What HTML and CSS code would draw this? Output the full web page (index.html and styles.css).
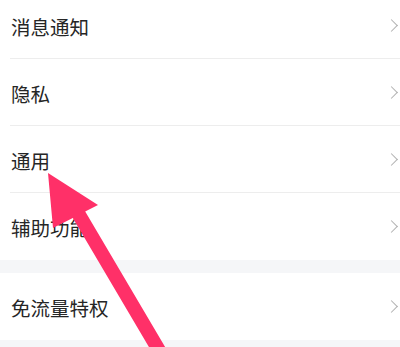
FILE: index.html
```html
<!DOCTYPE html>
<html lang="zh-CN">
<head>
    <meta charset="UTF-8">
    <meta name="viewport" content="width=device-width, initial-scale=1.0">
    <title>设置</title>
    <link rel="stylesheet" href="styles.css">
</head>
<body>
    <div class="page">
        <div class="group">
            <div class="row"><span class="label">消息通知</span><span class="chevron"></span></div>
            <div class="row"><span class="label">隐私</span><span class="chevron"></span></div>
            <div class="row"><span class="label">通用</span><span class="chevron"></span></div>
            <div class="row"><span class="label">辅助功能</span><span class="chevron"></span></div>
        </div>
        <div class="group">
            <div class="row"><span class="label">免流量特权</span><span class="chevron"></span></div>
        </div>

        <!-- pointer drawn over the list -->
        <svg class="pointer" width="400" height="347" viewBox="0 0 400 347">
            <polygon points="48,173 98,205 85.2,211.5 172.8,360 156.6,360 72.8,217.9 53,228" fill="#ff3068"/>
        </svg>
    </div>
</body>
</html>
```

FILE: styles.css
```css
html, body {
    margin: 0;
    padding: 0;
    background: #f5f6f8;
}
body {
    font-family: "Noto Sans CJK SC", "Noto Sans", sans-serif;
    color: #262626;
    overflow: hidden;
    height: 347px;
}
.page {
    position: relative;
    width: 400px;
    height: 347px;
    overflow: hidden;
}
.group {
    background: #fff;
    padding-left: 10px;
    margin-bottom: 13px;
}
.group:first-child {
    margin-top: -8px;
}
.row {
    height: 66px;
    display: flex;
    align-items: center;
    justify-content: space-between;
    border-bottom: 1px solid #ededed;
    padding-right: 4px;
}
.row:last-child {
    border-bottom: none;
    height: 67px;
}
.label {
    font-size: 19.5px;
    padding-left: 1px;
    padding-top: 2px;
}
.chevron {
    width: 8px;
    height: 8px;
    border-top: 1.6px solid #b0b0b0;
    border-right: 1.6px solid #b0b0b0;
    transform: rotate(45deg);
}
.pointer {
    position: absolute;
    left: 0;
    top: 0;
}
```
